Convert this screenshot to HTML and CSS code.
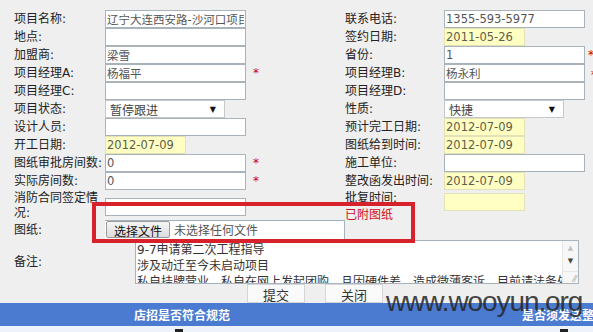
FILE: index.html
```html
<!DOCTYPE html>
<html lang="zh-CN">
<head>
    <meta charset="UTF-8">
    <meta name="viewport" content="width=device-width, initial-scale=1.0">
    <title>项目信息</title>
    <link rel="stylesheet" href="styles.css">
</head>
<body>
    <div class="form">
        <div class="row">
            <div class="label">项目名称:</div>
            <div class="field"><input class="input" type="text" value="辽宁大连西安路-沙河口项目"></div>
            <div class="label">联系电话:</div>
            <div class="field"><input class="input" type="text" value="1355-593-5977"></div>
        </div>
        <div class="row">
            <div class="label">地点:</div>
            <div class="field"><input class="input" type="text" value=""></div>
            <div class="label">签约日期:</div>
            <div class="field"><input class="input date" type="text" value="2011-05-26"></div>
        </div>
        <div class="row">
            <div class="label">加盟商:</div>
            <div class="field"><input class="input" type="text" value="梁雪"></div>
            <div class="label">省份:</div>
            <div class="field"><input class="input" type="text" value="1"><span class="req req-right">*</span></div>
        </div>
        <div class="row">
            <div class="label">项目经理A:</div>
            <div class="field"><input class="input" type="text" value="杨福平"><span class="req">*</span></div>
            <div class="label">项目经理B:</div>
            <div class="field"><input class="input" type="text" value="杨永利"><span class="req req-right req-low">*</span></div>
        </div>
        <div class="row">
            <div class="label">项目经理C:</div>
            <div class="field"><input class="input" type="text" value=""></div>
            <div class="label">项目经理D:</div>
            <div class="field"><input class="input" type="text" value=""></div>
        </div>
        <div class="row">
            <div class="label">项目状态:</div>
            <div class="field"><div class="select"><span>暂停跟进</span><span class="arrow">▼</span></div></div>
            <div class="label">性质:</div>
            <div class="field"><div class="select"><span>快捷</span><span class="arrow">▼</span></div></div>
        </div>
        <div class="row">
            <div class="label">设计人员:</div>
            <div class="field"><input class="input" type="text" value=""></div>
            <div class="label">预计完工日期:</div>
            <div class="field"><input class="input date" type="text" value="2012-07-09"></div>
        </div>
        <div class="row">
            <div class="label">开工日期:</div>
            <div class="field"><input class="input date" type="text" value="2012-07-09"></div>
            <div class="label">图纸给到时间:</div>
            <div class="field"><input class="input date" type="text" value="2012-07-09"></div>
        </div>
        <div class="row">
            <div class="label">图纸审批房间数:</div>
            <div class="field"><input class="input" type="text" value="0"><span class="req">*</span></div>
            <div class="label">施工单位:</div>
            <div class="field"><input class="input" type="text" value=""></div>
        </div>
        <div class="row">
            <div class="label">实际房间数:</div>
            <div class="field"><input class="input" type="text" value="0"><span class="req">*</span></div>
            <div class="label">整改函发出时间:</div>
            <div class="field"><input class="input date" type="text" value="2012-07-09"></div>
        </div>
        <div class="row row-tall">
            <div class="label label-wrap">消防合同签定情况:</div>
            <div class="field"><input class="input input-mid" type="text" value=""></div>
            <div class="label label-wrap">批复时间:<br><span class="attached">已附图纸</span></div>
            <div class="field"><input class="input date input-top" type="text" value=""></div>
        </div>
        <div class="row row-file">
            <div class="label">图纸:</div>
            <div class="file">
                <button class="file-btn" type="button">选择文件</button>
                <span class="file-name">未选择任何文件</span>
            </div>
        </div>
        <div class="row row-memo">
            <div class="label">备注:</div>
            <div class="memo">
                <div class="memo-text">
                    <div>9-7申请第二次工程指导</div>
                    <div>涉及动迁至今未启动项目</div>
                    <div>私自挂牌营业、私自在网上发起团购，且因硬件差，造成微薄客诉，目前请法务处理</div>
                </div>
                <div class="memo-scroll">
                    <span class="scroll-up">▲</span>
                    <span class="scroll-down">▼</span>
                    <span class="grip">⁄⁄</span>
                </div>
            </div>
        </div>
        <div class="actions">
            <button class="btn" type="button">提交</button>
            <button class="btn" type="button">关闭</button>
        </div>
    </div>

    <div class="bar">
        <div class="bar-left">店招是否符合规范</div>
        <div class="bar-right">是否须发送整改函</div>
    </div>
    <div class="bar-sub">
        <span class="mark mark-left"></span>
        <span class="mark mark-right"></span>
    </div>

    <!-- overlays: the red annotation box and the site watermark -->
    <div class="annotation"></div>
    <div class="watermark">www.wooyun.org</div>
</body>
</html>
```

FILE: styles.css
```css
body {
    margin: 0;
    width: 593px;
    height: 332px;
    overflow: hidden;
    position: relative;
    background-color: #efefef;
    font-family: "DejaVu Sans", "Noto Sans CJK SC", sans-serif;
    font-size: 12px;
    color: #222;
}

.form {
    padding: 10px 0 0 14px;
}

.row {
    display: grid;
    grid-template-columns: 91px 240px 99px 149px;
    height: 18px;
    align-items: center;
}

.label {
    white-space: nowrap;
    line-height: 14px;
}

.field {
    display: flex;
    align-items: center;
}

.input {
    width: 141px;
    height: 18px;
    box-sizing: border-box;
    margin: 0;
    padding: 0 1px;
    border: 1px solid #a9b3bc;
    background-color: #fff;
    font-family: inherit;
    font-size: 11.5px;
    color: #555;
    outline: none;
}

.input.date {
    width: 81px;
    background-color: #ffffc4;
    border-color: #e2e2b6;
    color: #5e5e48;
}

.req {
    margin-left: 7px;
    color: #d40000;
    font-size: 12px;
}

.req-right {
    margin-left: 3px;
}

.req-low {
    margin-left: 6px;
    margin-top: 4px;
}

.select {
    width: 120px;
    height: 18px;
    box-sizing: border-box;
    display: flex;
    align-items: center;
    justify-content: space-between;
    padding: 0 8px 0 4px;
    border: 1px solid #c4c8cc;
    background-color: #fff;
    color: #444;
}

.select .arrow {
    font-size: 8px;
    color: #111;
}

/* two-line row: 消防合同签定情况 / 批复时间 */
.row-tall {
    height: 29px;
    align-items: start;
}

.label-wrap {
    white-space: normal;
    line-height: 14.5px;
    padding-top: 1px;
}

.input-mid {
    margin-top: 8px;
}

.input-top {
    margin-top: 3px;
}

.attached {
    color: #d0101a;
    line-height: 18px;
}

.row-file {
    height: 21px;
}

.file {
    width: 240px;
    height: 20px;
    box-sizing: border-box;
    display: flex;
    align-items: center;
    gap: 4px;
    padding-left: 1px;
    border: 1px solid #a9b3bc;
    border-left: none;
    background-color: #fff;
}

.file-btn {
    width: 64px;
    height: 17px;
    margin: 0;
    padding: 0;
    border: 1px solid #9a9a9a;
    border-radius: 2px;
    background: linear-gradient(#f6f6f6, #dcdcdc);
    font-family: inherit;
    font-size: 12px;
    color: #111;
}

.file-name {
    color: #555;
}

.row-memo {
    grid-template-columns: 91px 488px;
    height: 44px;
}

.memo {
    width: 444px;
    height: 44px;
    margin-left: 30px;
    box-sizing: border-box;
    display: flex;
    border: 1px solid #a9b3bc;
    background-color: #fff;
}

.memo-text {
    flex: 1;
    overflow: hidden;
    white-space: nowrap;
    padding: 1px 0 0 1px;
    line-height: 16px;
    color: #333;
}

.memo-scroll {
    width: 15px;
    display: flex;
    flex-direction: column;
    align-items: center;
    background-color: #f7f7f7;
    border-left: 1px solid #e6e6e6;
    font-size: 7px;
    line-height: 13px;
}

.scroll-up {
    color: #c2c2c2;
    margin-top: 1px;
}

.scroll-down {
    color: #444;
    padding-bottom: 3px;
    border-bottom: 1px solid #e6e6e6;
    width: 100%;
    text-align: center;
}

.grip {
    margin-top: 1px;
    font-size: 8px;
    color: #999;
    align-self: flex-end;
    letter-spacing: -3px;
    padding-right: 3px;
}

.actions {
    display: flex;
    gap: 20px;
    height: 19px;
    padding-left: 233px;
}

.btn {
    width: 58px;
    height: 19px;
    margin: 0;
    padding: 0;
    border: 1px solid #d6d6d6;
    background-color: #fafafa;
    font-family: inherit;
    font-size: 13px;
    color: #333;
}

.bar {
    display: grid;
    grid-template-columns: 364px 1fr;
    height: 23px;
    align-items: center;
    background-color: #4b7bd0;
    color: #fff;
    font-weight: bold;
    font-size: 12px;
    white-space: nowrap;
    overflow: hidden;
}

.bar-left {
    text-align: center;
}

.bar-right {
    padding-left: 158px;
}

.bar-sub {
    height: 6px;
    background-color: #eef3fa;
    position: relative;
}

.mark {
    position: absolute;
    top: 3px;
    width: 8px;
    height: 3px;
    background-color: #222;
}

.mark-left {
    left: 175px;
}

.mark-right {
    left: 560px;
}

.annotation {
    position: absolute;
    left: 92px;
    top: 202px;
    width: 323px;
    height: 41px;
    box-sizing: border-box;
    border: 4px solid #d8222b;
}

.watermark {
    position: absolute;
    left: 386px;
    top: 288px;
    font-family: "Liberation Sans", Arial, sans-serif;
    font-size: 28px;
    line-height: 28px;
    letter-spacing: -1.1px;
    color: #262626;
    opacity: 0.85;
}
```
